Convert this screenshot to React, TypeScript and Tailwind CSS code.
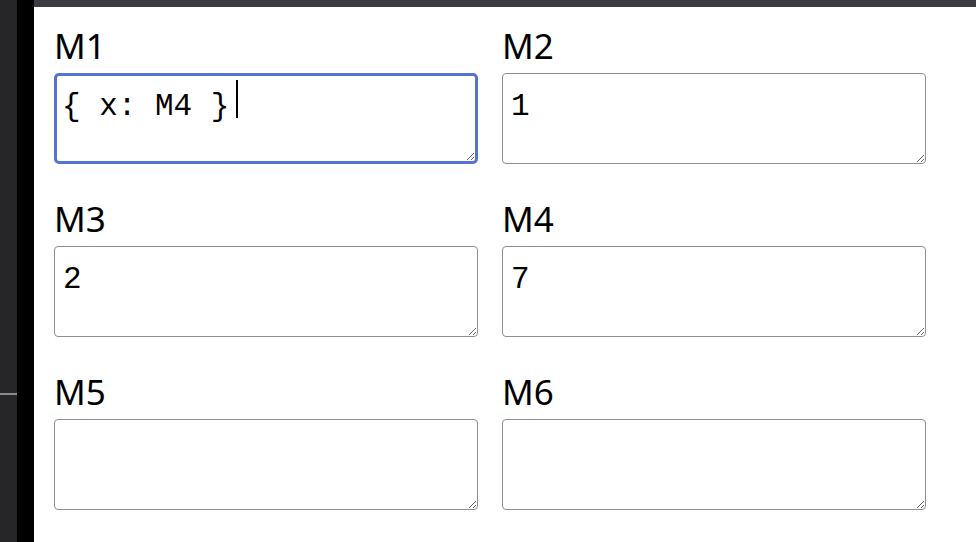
import { useState } from "react";

const fields = [
  { id: "M1", value: "{ x: M4 }", focused: true },
  { id: "M2", value: "1" },
  { id: "M3", value: "2" },
  { id: "M4", value: "7" },
  { id: "M5", value: "" },
  { id: "M6", value: "" },
];

function Field({ id, value, focused }: { id: string; value: string; focused?: boolean }) {
  const [text, setText] = useState(value);
  return (
    <div className="flex flex-col">
      <label
        htmlFor={id}
        className="text-[35px] leading-[40px] text-black mb-[7px] font-[family-name:Noto_Sans,sans-serif]"
      >
        {id}
      </label>
      <div className="relative">
        <textarea
          id={id}
          value={text}
          onChange={(e) => setText(e.target.value)}
          className={
            focused
              ? "block w-[424px] h-[91px] bg-white border-[3px] border-[#5673cf] rounded-[5px] pt-[8px] pl-[5px] pr-[6px] text-[31px] text-black outline-none font-[family-name:Courier_New,Nimbus_Mono_PS,FreeMono,Liberation_Mono,monospace]"
              : "block w-[424px] h-[91px] bg-white border border-[#8f8f8f] rounded-[4px] pt-[10px] px-[8px] text-[31px] text-black outline-none font-[family-name:Courier_New,Nimbus_Mono_PS,FreeMono,Liberation_Mono,monospace]"
          }
        />
        {focused && (
          <span className="absolute left-[182px] top-[7px] w-[2px] h-[38px] bg-black" />
        )}
      </div>
    </div>
  );
}

export default function App() {
  return (
    <div className="flex w-[976px] h-[542px] overflow-hidden bg-white">
      <div className="w-[17px] bg-[#262628] flex flex-col">
        <div className="h-[393px]" />
        <div className="h-[2px] bg-[#8a8a8a]" />
      </div>
      <div className="w-[17px] bg-black" />
      <div className="flex-1 flex flex-col">
        <div className="h-[7px] bg-[#3b3b40]" />
        <div className="grid grid-cols-[424px_424px] gap-x-[24px] gap-y-[35px] pl-[20px] pt-[19px]">
          {fields.map((f) => (
            <Field key={f.id} {...f} />
          ))}
        </div>
      </div>
    </div>
  );
}
